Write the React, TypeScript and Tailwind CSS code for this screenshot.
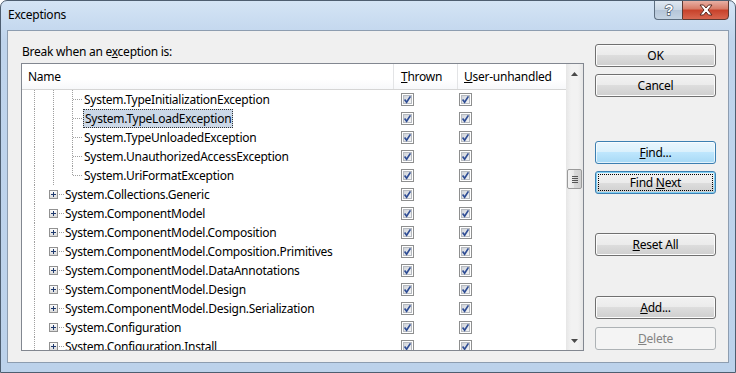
import React from "react";

const nested = [
  "System.TypeInitializationException",
  "System.TypeLoadException",
  "System.TypeUnloadedException",
  "System.UnauthorizedAccessException",
  "System.UriFormatException",
];

const topLevel = [
  "System.Collections.Generic",
  "System.ComponentModel",
  "System.ComponentModel.Composition",
  "System.ComponentModel.Composition.Primitives",
  "System.ComponentModel.DataAnnotations",
  "System.ComponentModel.Design",
  "System.ComponentModel.Design.Serialization",
  "System.Configuration",
  "System.Configuration.Install",
];

function CheckBox() {
  return (
    <svg width="13" height="13" viewBox="0 0 13 13">
      <defs>
        <linearGradient id="cbg" x1="0" y1="0" x2="1" y2="1">
          <stop offset="0" stopColor="#cdd1d7" />
          <stop offset="1" stopColor="#f7f7f7" />
        </linearGradient>
      </defs>
      <rect x="0.5" y="0.5" width="12" height="12" fill="#fff" stroke="#8e8f8f" />
      <rect x="2.5" y="2.5" width="8" height="8" fill="url(#cbg)" stroke="#b6bac0" />
      <path d="M3.6 6.6 L5.6 9.2 L9.4 3.4" fill="none" stroke="#2f4d94" strokeWidth="1.7" />
    </svg>
  );
}

function NestedLines({ last }: { last: boolean }) {
  return (
    <svg width="62" height="19" className="shrink-0">
      <line x1="12.5" y1="0" x2="12.5" y2="19" stroke="#a0a0a0" strokeDasharray="1 1" />
      <line x1="31.5" y1="0" x2="31.5" y2="19" stroke="#a0a0a0" strokeDasharray="1 1" />
      <line x1="50.5" y1="0" x2="50.5" y2={last ? 10 : 19} stroke="#a0a0a0" strokeDasharray="1 1" />
      <line x1="51" y1="9.5" x2="61" y2="9.5" stroke="#a0a0a0" strokeDasharray="1 1" />
    </svg>
  );
}

function PlusLines() {
  return (
    <svg width="43" height="19" className="shrink-0">
      <defs>
        <linearGradient id="pbg" x1="0" y1="0" x2="0" y2="1">
          <stop offset="0" stopColor="#ffffff" />
          <stop offset="1" stopColor="#d8d8d8" />
        </linearGradient>
      </defs>
      <line x1="12.5" y1="0" x2="12.5" y2="19" stroke="#a0a0a0" strokeDasharray="1 1" />
      <rect x="27.5" y="5.5" width="8" height="8" fill="url(#pbg)" stroke="#919191" />
      <line x1="29" y1="9.5" x2="34" y2="9.5" stroke="#1f3a6e" />
      <line x1="31.5" y1="7" x2="31.5" y2="12" stroke="#1f3a6e" />
      <line x1="37" y1="9.5" x2="42" y2="9.5" stroke="#a0a0a0" strokeDasharray="1 1" />
    </svg>
  );
}

function Checks() {
  return (
    <>
      <div className="w-[64px] shrink-0 flex items-center pl-[7px]">
        <CheckBox />
      </div>
      <div className="w-[108px] shrink-0 flex items-center pl-[1px]">
        <CheckBox />
      </div>
    </>
  );
}

function Btn({
  children,
  kind = "normal",
}: {
  children: React.ReactNode;
  kind?: "normal" | "hot" | "default" | "disabled";
}) {
  const base = "h-[23px] w-[121px] rounded-[3px] border flex items-center justify-center text-[12px]";
  if (kind === "hot")
    return (
      <div className={`${base} border-[#3c7fb1] bg-[linear-gradient(#eaf6fd,#d9f0fc_50%,#bee6fd_50%,#a7d9f5)] text-black shadow-[inset_0_0_0_1px_#ffffffaa]`}>
        {children}
      </div>
    );
  if (kind === "default")
    return (
      <div className={`${base} border-[#3c7fb1] bg-[linear-gradient(#f2f2f2,#ebebeb_50%,#dddddd_50%,#cfcfcf)] shadow-[inset_0_0_0_1px_#7fd0f5] p-[2px]`}>
        <div className="w-full h-full border border-dotted border-black flex items-center justify-center">{children}</div>
      </div>
    );
  if (kind === "disabled")
    return <div className={`${base} border-[#adb2b5] bg-[#f4f4f4] text-[#838383]`}>{children}</div>;
  return (
    <div className={`${base} border-[#707070] bg-[linear-gradient(#f2f2f2,#ebebeb_50%,#dddddd_50%,#cfcfcf)] shadow-[inset_0_0_0_1px_#fcfcfc] text-black`}>
      {children}
    </div>
  );
}

export default function App() {
  return (
    <div className="w-[736px] h-[373px] overflow-hidden border border-[#4e5e70] rounded-t-[7px] bg-[linear-gradient(#d4e4f5,#bfd4ec_40px,#bcd2eb)] flex flex-col font-['Noto_Sans',sans-serif] text-[12px] tracking-[-0.25px] text-black">
      {/* title bar */}
      <div className="h-[29px] flex items-start shrink-0">
        <div className="pl-[7px] pt-[6px] leading-[16px] flex-1">Exceptions</div>
        <div className="flex -mt-[1px] mr-[6px]">
          <div className="w-[28px] h-[20px] border border-[#5d6e80] border-r-0 rounded-bl-[4px] bg-[linear-gradient(#dfe8f2,#c9d6e4_50%,#b4c5d8_50%,#c4d3e3)] flex items-center justify-center">
            <svg width="14" height="14" viewBox="0 0 14 14">
              <text x="7" y="12" textAnchor="middle" fontFamily="Liberation Sans, sans-serif" fontWeight="bold" fontSize="14" fill="#fff" stroke="#4b5a6b" strokeWidth="1.4" paintOrder="stroke">?</text>
            </svg>
          </div>
          <div className="w-[47px] h-[20px] border border-[#5d3a33] rounded-br-[4px] bg-[linear-gradient(#e8b0a4,#d77a66_45%,#c7412a_50%,#d8664f)] flex items-center justify-center">
            <svg width="16" height="12" viewBox="0 0 16 12">
              <path d="M2 1 L5.5 1 L8 4 L10.5 1 L14 1 L10 6 L14 11 L10.5 11 L8 8 L5.5 11 L2 11 L6 6 Z" fill="#fff" stroke="#5a2a22" strokeWidth="1" strokeLinejoin="round" />
            </svg>
          </div>
        </div>
      </div>

      {/* client area */}
      <div className="ml-[6px] w-[722px] h-[333px] border border-[#8d9db0] bg-[#f0f0f0] flex shrink-0">
        <div className="ml-[13px] flex flex-col">
          <div className="mt-[13px] h-[16px] leading-[16px] pl-[1px]">
            Break when an e<span className="underline">x</span>ception is:
          </div>
          <div className="mt-[3px] h-[288px] w-[563px] border border-[#828790] bg-white flex">
            <div className="w-[544px] flex flex-col overflow-hidden">
              {/* header */}
              <div className="h-[26px] shrink-0 flex border-b border-[#d5d5d5] bg-[linear-gradient(#ffffff,#ffffff_60%,#f7f8fa)]">
                <div className="w-[372px] shrink-0 border-r border-[#e3e4e6] pl-[6px] flex items-center">Name</div>
                <div className="w-[64px] shrink-0 border-r border-[#e3e4e6] pl-[7px] flex items-center">
                  <span className="underline">T</span>hrown
                </div>
                <div className="flex-1 pl-[6px] flex items-center">
                  <span className="underline">U</span>ser-unhandled
                </div>
              </div>
              {/* rows */}
              {nested.map((n, i) => (
                <div key={n} className="h-[19px] shrink-0 flex">
                  <div className="w-[372px] shrink-0 flex items-center">
                    <NestedLines last={i === nested.length - 1} />
                    {i === 1 ? (
                      <span className="-ml-[1px] h-[19px] leading-[17px] px-[1px] bg-[#cbd8e7] border border-dotted border-[#333]">{n}</span>
                    ) : (
                      <span className="leading-[19px]">{n}</span>
                    )}
                  </div>
                  <Checks />
                </div>
              ))}
              {topLevel.map((n) => (
                <div key={n} className="h-[19px] shrink-0 flex">
                  <div className="w-[372px] shrink-0 flex items-center">
                    <PlusLines />
                    <span className="leading-[19px] whitespace-nowrap">{n}</span>
                  </div>
                  <Checks />
                </div>
              ))}
            </div>
            {/* scrollbar */}
            <div className="w-[17px] shrink-0 bg-[linear-gradient(90deg,#e6e6e6,#f2f2f2_30%,#f2f2f2_70%,#e6e6e6)] flex flex-col items-center">
              <div className="h-[17px] w-full flex items-center justify-center mt-[1px]">
                <svg width="7" height="4"><path d="M0 4 L3.5 0 L7 4 Z" fill="#4a4a4a" /></svg>
              </div>
              <div className="mt-[87px] w-[15px] h-[20px] rounded-[2px] border border-[#9a9a9a] bg-[linear-gradient(90deg,#f4f4f4,#e6e6e6_50%,#d9d9d9_50%,#cfcfcf)] flex flex-col items-center justify-center gap-[1px]">
                <div className="w-[6px] h-[1px] bg-[#555]" />
                <div className="w-[6px] h-[1px] bg-[#555]" />
                <div className="w-[6px] h-[1px] bg-[#555]" />
                <div className="w-[6px] h-[1px] bg-[#555]" />
              </div>
              <div className="flex-1" />
              <div className="h-[17px] w-full flex items-center justify-center mb-[1px]">
                <svg width="7" height="4"><path d="M0 0 L3.5 4 L7 0 Z" fill="#4a4a4a" /></svg>
              </div>
            </div>
          </div>
        </div>

        <div className="ml-[11px] flex flex-col">
          <div className="mt-[13px]">
            <Btn>OK</Btn>
          </div>
          <div className="mt-[7px]">
            <Btn>Cancel</Btn>
          </div>
          <div className="mt-[44px]">
            <Btn kind="hot">
              <span className="underline">F</span>ind...
            </Btn>
          </div>
          <div className="mt-[7px]">
            <Btn kind="default">
              Find&nbsp;<span className="underline">N</span>ext
            </Btn>
          </div>
          <div className="mt-[39px]">
            <Btn>
              <span className="underline">R</span>eset All
            </Btn>
          </div>
          <div className="mt-[40px]">
            <Btn>
              <span className="underline">A</span>dd...
            </Btn>
          </div>
          <div className="mt-[8px]">
            <Btn kind="disabled">
              <span className="underline">D</span>elete
            </Btn>
          </div>
        </div>
      </div>
    </div>
  );
}
